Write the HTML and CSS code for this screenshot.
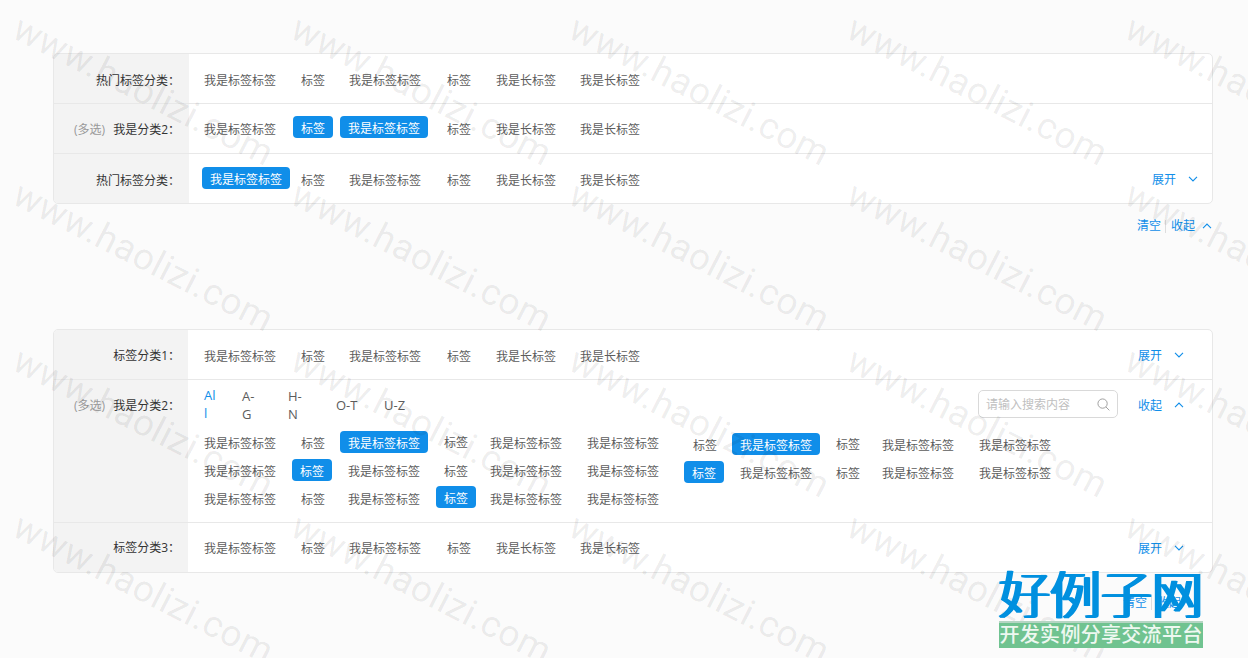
FILE: index.html
```html
<!DOCTYPE html>
<html lang="zh-CN">

<head>
    <meta charset="utf-8">
    <link rel="stylesheet" href="styles.css">
    <title>标签筛选</title>
</head>

<body>
    <svg class="defs">
        <symbol id="down" viewBox="0 0 10 6"><path d="M1 .8 L5 5 L9 .8" /></symbol>
        <symbol id="up" viewBox="0 0 10 6"><path d="M1 5.2 L5 1 L9 5.2" /></symbol>
    </svg>

    <div class="panel panel1">
        <div class="row">
            <div class="label">热门标签分类：</div>
            <div class="tags">
                <span class="tag">我是标签标签</span><span class="tag">标签</span><span class="tag">我是标签标签</span>
                <span class="tag">标签</span><span class="tag">我是长标签</span><span class="tag">我是长标签</span>
            </div>
        </div>
        <div class="row row-up">
            <div class="label"><em>(多选)</em>我是分类2：</div>
            <div class="tags">
                <span class="tag">我是标签标签</span><span class="tag active">标签</span><span class="tag active left1">我是标签标签</span>
                <span class="tag">标签</span><span class="tag">我是长标签</span><span class="tag">我是长标签</span>
            </div>
        </div>
        <div class="row">
            <div class="label">热门标签分类：</div>
            <div class="tags">
                <span class="tag active first">我是标签标签</span><span class="tag">标签</span><span class="tag">我是标签标签</span>
                <span class="tag">标签</span><span class="tag">我是长标签</span><span class="tag">我是长标签</span>
            </div>
            <a class="more">展开<svg class="arrow"><use href="#down" /></svg></a>
        </div>
    </div>
    <div class="foot foot1">
        <a>清空</a><i></i><a>收起</a><svg class="arrow"><use href="#up" /></svg>
    </div>

    <div class="panel panel2">
        <div class="row">
            <div class="label">标签分类1：</div>
            <div class="tags">
                <span class="tag">我是标签标签</span><span class="tag">标签</span><span class="tag">我是标签标签</span>
                <span class="tag">标签</span><span class="tag">我是长标签</span><span class="tag">我是长标签</span>
            </div>
            <a class="more">展开<svg class="arrow"><use href="#down" /></svg></a>
        </div>
        <div class="row row-open">
            <div class="label"><em>(多选)</em>我是分类2：</div>
            <div class="detail">
                <div class="top">
                    <div class="letters">
                        <span class="on">Al<br>l</span><span>A-<br>G</span><span>H-<br>N</span><span>O-T</span><span>U-Z</span>
                    </div>
                    <div class="search">
                        <span>请输入搜索内容</span>
                        <svg viewBox="0 0 14 14"><circle cx="6" cy="6" r="5" /><path d="M9.6 9.6 L13.3 13.3" /></svg>
                    </div>
                    <a class="more">收起<svg class="arrow"><use href="#up" /></svg></a>
                </div>
                <div class="groups">
                    <div class="group left">
                        <span class="tag">我是标签标签</span><span class="tag">标签</span><span class="tag active">我是标签标签</span>
                        <span class="tag raise">标签</span><span class="tag">我是标签标签</span><span class="tag">我是标签标签</span>
                        <span class="tag">我是标签标签</span><span class="tag active left1">标签</span><span class="tag">我是标签标签</span>
                        <span class="tag">标签</span><span class="tag">我是标签标签</span><span class="tag">我是标签标签</span>
                        <span class="tag">我是标签标签</span><span class="tag">标签</span><span class="tag">我是标签标签</span>
                        <span class="tag active high">标签</span><span class="tag">我是标签标签</span><span class="tag">我是标签标签</span>
                    </div>
                    <div class="group right">
                        <span class="tag">标签</span><span class="tag active">我是标签标签</span><span class="tag raise">标签</span>
                        <span class="tag">我是标签标签</span><span class="tag">我是标签标签</span>
                        <span class="tag active left1">标签</span><span class="tag">我是标签标签</span><span class="tag">标签</span>
                        <span class="tag">我是标签标签</span><span class="tag">我是标签标签</span>
                    </div>
                </div>
            </div>
        </div>
        <div class="row row-last">
            <div class="label">标签分类3：</div>
            <div class="tags">
                <span class="tag">我是标签标签</span><span class="tag">标签</span><span class="tag">我是标签标签</span>
                <span class="tag">标签</span><span class="tag">我是长标签</span><span class="tag">我是长标签</span>
            </div>
            <a class="more">展开<svg class="arrow"><use href="#down" /></svg></a>
        </div>
    </div>
    <div class="foot foot2">
        <a>清空</a><i></i><a>收起</a>
    </div>

    <div class="watermark">
        <span>www.haolizi.com</span><span>www.haolizi.com</span><span>www.haolizi.com</span><span>www.haolizi.com</span><span>www.haolizi.com</span>
        <span>www.haolizi.com</span><span>www.haolizi.com</span><span>www.haolizi.com</span><span>www.haolizi.com</span><span>www.haolizi.com</span>
        <span>www.haolizi.com</span><span>www.haolizi.com</span><span>www.haolizi.com</span><span>www.haolizi.com</span><span>www.haolizi.com</span>
        <span>www.haolizi.com</span><span>www.haolizi.com</span><span>www.haolizi.com</span><span>www.haolizi.com</span><span>www.haolizi.com</span>
    </div>
    <div class="logo">
        <div class="name">好例子网</div>
        <div class="slogan">开发实例分享交流平台</div>
    </div>
</body>

</html>
```
FILE: styles.css
```css
* {
    box-sizing: border-box;
}
html {
    overflow: hidden;
}
body {
    margin: 0;
    height: 658px;
    overflow: hidden;
    padding: 53px 35px 0 53px;
    position: relative;
    background-color: #fbfbfb;
    font-family: "Open Sans", "Noto Sans CJK SC", sans-serif;
    font-size: 12px;
    color: #5c5c5c;
}
.defs {
    display: none;
}
.panel {
    border: 1px solid #e8e8e8;
    border-radius: 5px;
    background-color: #fff;
    overflow: hidden;
}
.row {
    display: flex;
    height: 50px;
    border-bottom: 1px solid #e8e8e8;
}
.row:last-child {
    height: 49px;
    border-bottom: none;
}
.label {
    width: 135px;
    padding: 16px 9px 0 0;
    background-color: #f3f3f3;
    color: #333;
    line-height: 22px;
    text-align: right;
    white-space: nowrap;
}
.label em {
    margin-right: 8px;
    font-style: normal;
    color: #999;
}
.panel2 .label {
    width: 134px;
    padding: 15px 8px 0 0;
}
.tags {
    flex: 1;
    display: grid;
    grid-template-columns: 97px 48px 98px 49px 84px 80px;
    align-content: start;
    padding: 15px 0 0 7px;
}
.panel2 .tags {
    padding-left: 8px;
}
.row-up .tags {
    padding-top: 14px;
}
.row-up .label {
    padding-top: 15px;
}
.panel2 .row-last .tags,
.panel2 .row-last .label {
    padding-top: 14px;
}
.tag {
    justify-self: start;
    height: 22px;
    padding: 0 8px;
    line-height: 24px;
    white-space: nowrap;
}
.active {
    margin-top: -2px;
    border-radius: 4px;
    background-color: #108ee9;
    color: #fff;
    line-height: 25px;
}
.left1 {
    margin-left: -1px;
}
.first {
    margin-left: 6px;
}
.raise {
    margin-top: -1px;
}
a {
    color: #108ee9;
}
.arrow {
    width: 10px;
    height: 6px;
    fill: none;
    stroke: #108ee9;
    stroke-width: 1.1;
}
.more {
    display: flex;
    align-items: center;
    gap: 12px;
    height: 22px;
    margin: 15px 14px 0 0;
    line-height: 22px;
}
.more .arrow {
    margin-top: -2px;
}
.panel2 .more {
    margin-right: 28px;
}
.foot {
    display: flex;
    align-items: center;
    justify-content: flex-end;
    height: 22px;
    line-height: 24px;
}
.foot i {
    width: 1px;
    height: 13px;
    margin: 0 5px 0 4px;
    background-color: #ddd;
}
.foot .arrow {
    margin-left: 7px;
}
.foot1 {
    margin-top: 11px;
    padding-right: 1px;
}
.panel2 {
    margin-top: 92px;
}
.foot2 {
    margin-top: 19px;
    padding-right: 32px;
}

/* expanded category */
.row-open {
    height: 143px;
}
.detail {
    flex: 1;
}
.top {
    display: flex;
    height: 52px;
}
.letters {
    display: flex;
    flex: 1;
    align-items: center;
    padding: 0 0 2px 16px;
    font-size: 13px;
    line-height: 18px;
}
.letters span {
    width: 48px;
}
.letters span:first-child {
    width: 38px;
}
.letters span:nth-child(2) {
    width: 46px;
}
.letters .on {
    color: #108ee9;
    margin-top: -3px;
}
.search {
    display: flex;
    align-items: center;
    justify-content: space-between;
    width: 140px;
    height: 28px;
    margin: 10px 20px 0 0;
    padding: 0 7px;
    border: 1px solid #d9d9d9;
    border-radius: 5px;
    color: #bfbfbf;
}
.search svg {
    width: 13px;
    height: 13px;
    fill: none;
    stroke: #999;
}
.groups {
    display: flex;
}
.group {
    display: grid;
    grid-auto-rows: 28px;
}
.group .active {
    margin-top: -1px;
}
.group .high {
    margin-top: -2px;
}
.left {
    grid-template-columns: 97px 47px 96px 46px 97px 88px;
    padding-left: 8px;
}
.right {
    grid-template-columns: 47px 96px 46px 97px 88px;
    align-content: start;
    margin-left: 18px;
    padding-top: 2px;
}

/* overlays */
.watermark {
    position: absolute;
    top: 0;
    left: 0;
    width: 100%;
    height: 100%;
    overflow: hidden;
    display: grid;
    grid-template-columns: repeat(5, 278px);
    grid-auto-rows: 166px;
    place-items: center;
    align-content: start;
    padding: 8px 0 0 4px;
    pointer-events: none;
}
.watermark span {
    font-family: Roboto, sans-serif;
    font-size: 37px;
    line-height: 40px;
    letter-spacing: .4px;
    color: rgba(0, 0, 0, .075);
    transform: rotate(27deg);
}
.logo {
    position: absolute;
    left: 999px;
    top: 564px;
    width: 204px;
}
.name {
    height: 57px;
    font-family: "Noto Sans CJK SC", sans-serif;
    font-size: 51px;
    font-weight: 300;
    line-height: 56px;
    color: #0090df;
    text-shadow: 1px 0 #0090df, 2px 0 #0090df, -1px 0 #0090df, -2px 0 #0090df;
    white-space: nowrap;
}
.slogan {
    height: 27px;
    border-top: 2px solid #b5d5c3;
    background-color: #70c390;
    color: #eef8f1;
    font-size: 20px;
    font-weight: 500;
    line-height: 23px;
    letter-spacing: .3px;
    text-align: center;
    white-space: nowrap;
}
```
